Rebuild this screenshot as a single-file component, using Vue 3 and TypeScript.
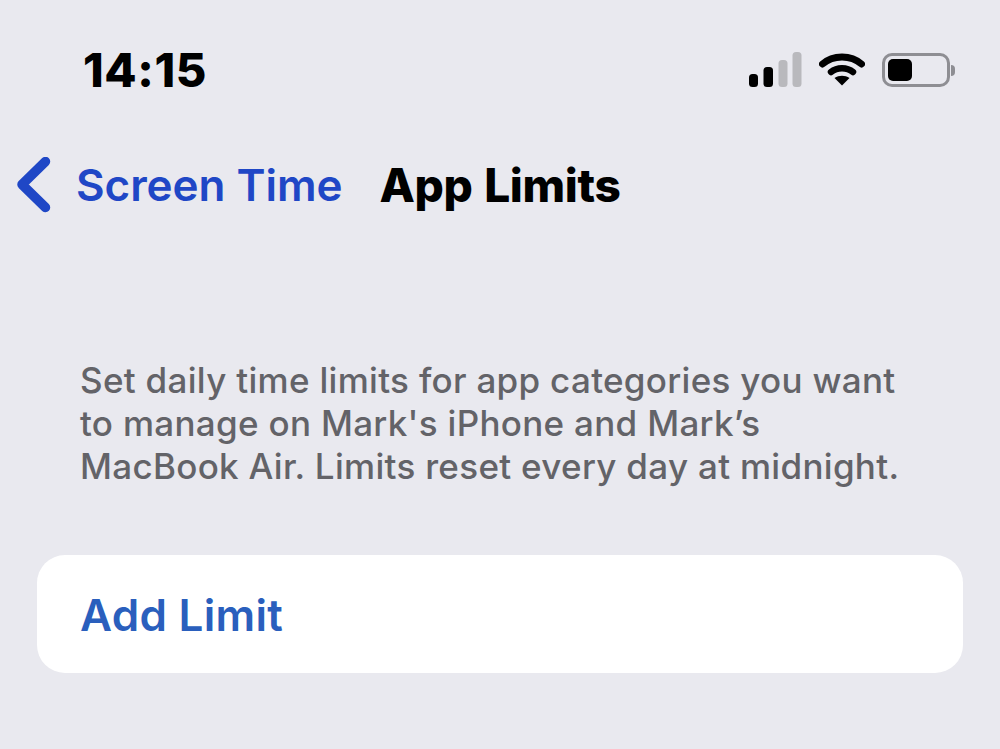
<script setup lang="ts">
const lines: string[] = [
  'Set daily time limits for app categories you want',
  "to manage on Mark's iPhone and Mark’s",
  'MacBook Air. Limits reset every day at midnight.',
]
</script>

<template>
  <div class="screen">
    <header class="status">
      <span class="time">14:15</span>
      <div class="indicators">
        <svg class="signal" width="53" height="36" viewBox="0 0 53 36">
          <rect x="0" y="22" width="9" height="13" rx="3.5" fill="#000" />
          <rect x="14.500" y="15" width="9.500" height="20" rx="3.5" fill="#000" />
          <rect x="29.500" y="8" width="9" height="27" rx="3.5" fill="#b9b9bd" />
          <rect x="43.500" y="0" width="9" height="35" rx="3.5" fill="#b9b9bd" />
        </svg>
        <svg class="wifi" width="46" height="36" viewBox="0 0 46 36">
          <path d="M3.500 13C14 3.500 32 3.500 42.500 13" fill="none" stroke="#000" stroke-width="7" stroke-linecap="round" />
          <path d="M12 21C18 16 28 16 34 21" fill="none" stroke="#000" stroke-width="6.500" stroke-linecap="round" />
          <path d="M15.500 27C20 24 26 24 30.500 27L23 34.500Z" fill="#000" />
        </svg>
        <div class="battery">
          <div class="battery-shell"><div class="battery-level"></div></div>
          <div class="battery-cap"></div>
        </div>
      </div>
    </header>

    <nav class="nav">
      <svg class="chevron" width="36" height="56" viewBox="0 0 36 56">
        <path d="M30.500 4.500L7 27.500L30.500 50.500" fill="none" stroke="#1f47c6" stroke-width="9.500" stroke-linecap="round" stroke-linejoin="round" />
      </svg>
      <span class="back">Screen Time</span>
      <span class="title">App Limits</span>
    </nav>

    <p class="desc">
      <span v-for="line in lines" :key="line" class="line">{{ line }}</span>
    </p>

    <div class="card"><span class="add">Add Limit</span></div>
  </div>
</template>

<style>
html, body { margin: 0; background: #e9e9ef; }
</style>

<style scoped>
.screen {
  width: 1000px;
  height: 749px;
  overflow: hidden;
  box-sizing: border-box;
  background: #e9e9ef;
  font-family: Inter, "Liberation Sans", sans-serif;
  padding-top: 42px;
}
.status {
  display: flex;
  align-items: center;
  justify-content: space-between;
  height: 56px;
  padding: 0 45px 0 83px;
}
.time {
  font-size: 47px;
  font-weight: 800;
  color: #000;
  letter-spacing: 0.6px;
  margin-top: -2px;
}
.indicators {
  display: flex;
  align-items: center;
}
.signal { margin-right: 17px; }
.wifi { margin-right: 17px; margin-top: -2px; }
.battery {
  display: flex;
  align-items: center;
  gap: 1px;
}
.battery-shell {
  width: 68px;
  height: 34px;
  box-sizing: border-box;
  border: 3px solid #8e8e93;
  border-radius: 10px;
  padding: 3px;
}
.battery-level {
  width: 24px;
  height: 100%;
  background: #000;
  border-radius: 5px;
}
.battery-cap {
  width: 4px;
  height: 11px;
  background: #8e8e93;
  border-radius: 0 4px 4px 0;
}
.nav {
  display: flex;
  align-items: center;
  height: 56px;
  margin-top: 59px;
  padding-left: 15px;
}
.back {
  font-size: 44px;
  font-weight: 600;
  color: #1f47c6;
  margin-left: 25px;
  letter-spacing: -0.05px;
}
.title {
  font-size: 46px;
  font-weight: 800;
  color: #000;
  margin-left: 37px;
  letter-spacing: -0.35px;
  word-spacing: 2px;
}
.desc {
  margin: 0;
  margin-top: 146px;
  padding-left: 80px;
  font-size: 35px;
  line-height: 43px;
  font-weight: 500;
  color: #636368;
  letter-spacing: 0.3px;
}
.line {
  display: block;
  white-space: nowrap;
}
.card {
  display: flex;
  align-items: center;
  box-sizing: border-box;
  width: 926px;
  height: 118px;
  margin-top: 67px;
  margin-left: 37px;
  padding-left: 43px;
  background: #fff;
  border-radius: 28px;
}
.add {
  font-size: 44px;
  font-weight: 600;
  color: #2a5fbd;
  letter-spacing: 0.3px;
  margin-top: 1px;
}
</style>
